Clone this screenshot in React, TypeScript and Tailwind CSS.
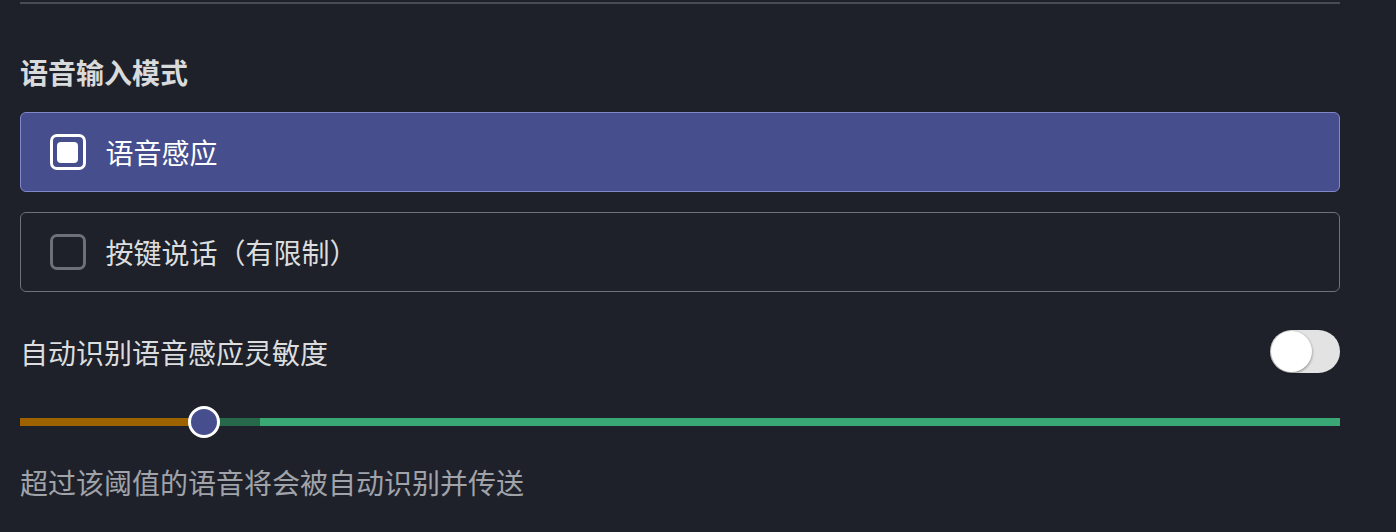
import { useState } from "react";

const FONT = { fontFamily: '"Noto Sans CJK SC", "Noto Sans", sans-serif' };

function Checkbox({ checked }: { checked: boolean }) {
  return (
    <span
      className={`flex h-[36px] w-[36px] shrink-0 items-center justify-center rounded-[7px] border-[3px] ${
        checked ? "border-white" : "border-[#6d7078]"
      }`}
    >
      {checked && <span className="h-[21px] w-[21px] rounded-[4px] bg-white" />}
    </span>
  );
}

function ModeOption({ label, selected, onSelect }: { label: string; selected: boolean; onSelect: () => void }) {
  return (
    <button
      type="button"
      onClick={onSelect}
      className={`flex h-[80px] w-full items-center gap-[20px] rounded-[6px] border-[1.5px] pl-[28.5px] text-left text-[28px] ${
        selected ? "border-[#8088c8] bg-[#464e8e] text-white" : "border-[#6f727a] bg-transparent text-[#dcddde]"
      }`}
    >
      <Checkbox checked={selected} />
      <span className="leading-[36px]">{label}</span>
    </button>
  );
}

export default function App() {
  const [mode, setMode] = useState("vad");
  const [auto, setAuto] = useState(false);

  return (
    <div className="h-[532px] w-[1396px] overflow-hidden bg-[#1e2129]" style={FONT}>
      <div className="ml-5 flex w-[1320px] flex-col pt-[2px]">
        <div className="h-[2px] bg-[#484b53]" />

        <h2 className="mt-[50px] text-[28px] font-bold leading-[36px] text-[#d9dadc]">语音输入模式</h2>

        <div className="mt-[22px] flex flex-col gap-[20px]">
          <ModeOption label="语音感应" selected={mode === "vad"} onSelect={() => setMode("vad")} />
          <ModeOption label="按键说话（有限制）" selected={mode === "ptt"} onSelect={() => setMode("ptt")} />
        </div>

        <div className="mt-[38px] flex h-[43px] items-center justify-between">
          <span className="text-[28px] leading-[36px] text-[#dcddde]">自动识别语音感应灵敏度</span>
          <button
            type="button"
            onClick={() => setAuto(!auto)}
            className={`flex h-[43px] w-[70px] items-center rounded-full p-[1px] ${
              auto ? "justify-end bg-[#3ba672]" : "justify-start bg-[#e3e3e3]"
            }`}
          >
            <span className="h-[41px] w-[41px] rounded-full bg-white shadow-[0_1px_3px_rgba(0,0,0,0.45)]" />
          </button>
        </div>

        <div className="relative mt-[33px] flex h-[32px] items-center">
          <div className="flex h-[8px] w-full">
            <div className="w-[184px] bg-[#9c6300]" />
            <div className="w-[56px] bg-[#28684a]" />
            <div className="flex-1 bg-[#3aa874]" />
          </div>
          <span className="absolute left-[168px] top-0 h-[32px] w-[32px] rounded-full border-[3px] border-white bg-[#464e8e]" />
        </div>

        <p className="mt-[26px] text-[28px] leading-[36px] text-[#a0a3a9]">超过该阈值的语音将会被自动识别并传送</p>
      </div>
    </div>
  );
}
